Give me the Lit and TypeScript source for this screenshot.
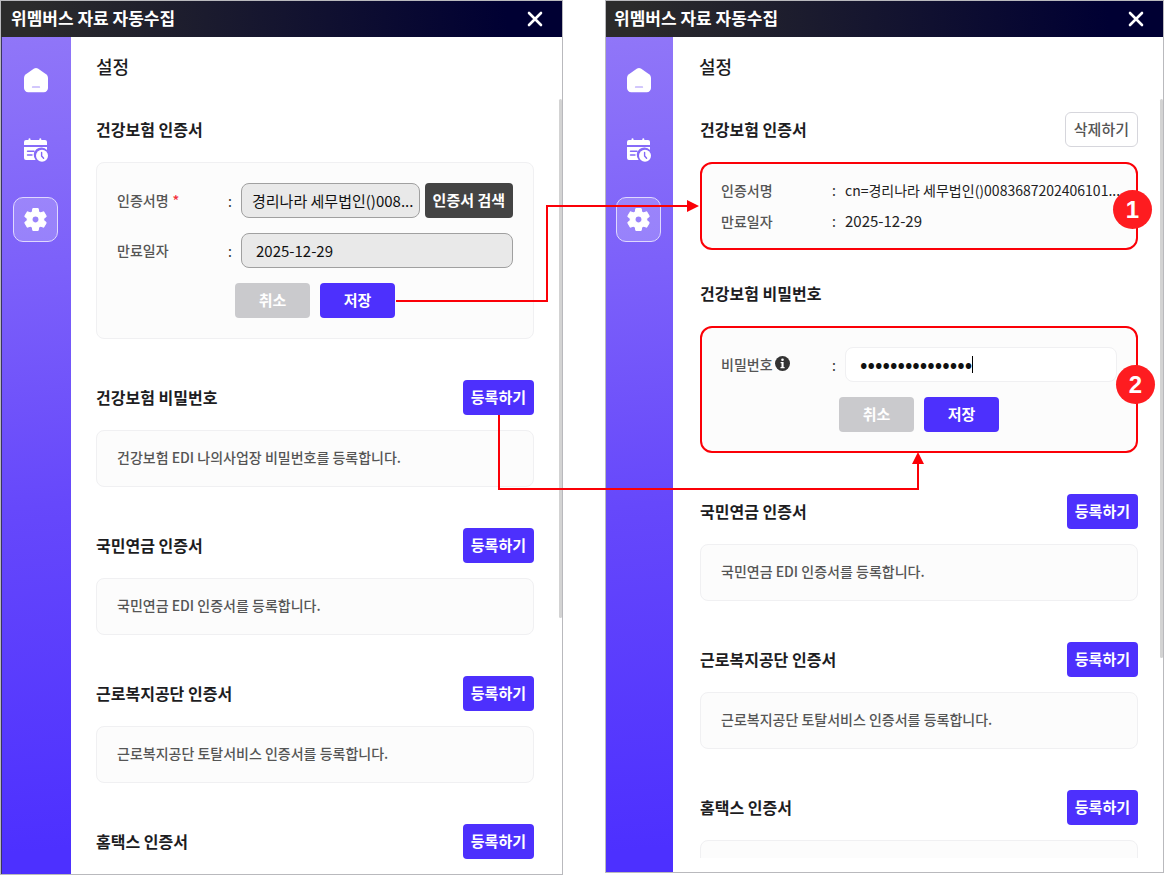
import { LitElement, html, css, svg, nothing } from "lit";
import { customElement, property } from "lit/decorators.js";

const FONT = css`"Noto Sans CJK KR", "Noto Sans", sans-serif`;

const homeIcon = svg`
  <svg class="icon" viewBox="0 0 26 26" width="26" height="26" aria-hidden="true">
    <path fill="#fff" d="M11.100 1.600a3.400 3.400 0 0 1 3.800 0l8.200 5.600a4.400 4.400 0 0 1 1.900 3.600V21a4.200 4.200 0 0 1-4.200 4.200H5.200A4.200 4.200 0 0 1 1 21V10.800a4.400 4.400 0 0 1 1.900-3.600z"/>
    <path d="M9.500 20h7" stroke="#a58ffa" stroke-width="1.200" stroke-linecap="round"/>
  </svg>`;

const scheduleIcon = svg`
  <svg class="icon" viewBox="0 0 26 26" width="26" height="26" aria-hidden="true">
    <path fill="#fff" d="M5.500 2.200a1 1 0 0 1 2 0V3h8.800v-.8a1 1 0 0 1 2 0V3H22a2 2 0 0 1 2 2v3H1V5a2 2 0 0 1 2-2h2.500z"/>
    <path fill="#fff" d="M1 10h23v3.100A7.200 7.200 0 0 0 12.600 23H3a2 2 0 0 1-2-2z"/>
    <path d="M4.500 14.200h6.500M4.500 18h4.500" stroke="#8267f8" stroke-width="1.400" stroke-linecap="round"/>
    <circle cx="19" cy="18.800" r="6.900" fill="#8267f8"/>
    <circle cx="19" cy="18.800" r="6" fill="#fff"/>
    <path d="M18.600 15.400v3.600l2 2.300" fill="none" stroke="#8267f8" stroke-width="1.400" stroke-linecap="round" stroke-linejoin="round"/>
  </svg>`;

const gearIcon = svg`
  <svg class="icon" viewBox="1 1 22 22" width="25" height="25" aria-hidden="true">
    <path fill="#fff" stroke="#fff" stroke-width="1" stroke-linejoin="round" d="M19.140 12.940c.04-.3.06-.61.06-.94 0-.32-.02-.64-.07-.94l2.030-1.580a.49.49 0 0 0 .12-.61l-1.920-3.320a.488.488 0 0 0-.59-.22l-2.390.96c-.5-.38-1.030-.7-1.620-.94l-.36-2.540a.484.484 0 0 0-.48-.41h-3.840c-.24 0-.43.17-.47.41l-.36 2.540c-.59.24-1.130.57-1.620.94l-2.390-.96c-.22-.08-.47 0-.59.22L2.740 8.870c-.12.21-.08.47.12.61l2.030 1.580c-.05.3-.09.63-.09.94s.02.64.07.94l-2.030 1.580a.49.49 0 0 0-.12.61l1.920 3.320c.12.22.37.29.59.22l2.390-.96c.5.38 1.030.7 1.620.94l.36 2.540c.05.24.24.41.48.41h3.840c.24 0 .44-.17.47-.41l.36-2.540c.59-.24 1.130-.56 1.620-.94l2.390.96c.22.08.47 0 .59-.22l1.920-3.320c.12-.22.07-.47-.12-.61zM12 15.100a3.100 3.100 0 1 1 0-6.200 3.100 3.100 0 0 1 0 6.200z"/>
  </svg>`;

const infoIcon = svg`
  <svg viewBox="0 0 15 15" width="15" height="15" role="img" aria-label="도움말">
    <circle cx="7.500" cy="7.500" r="7.500" fill="#333"/>
    <circle cx="7.500" cy="3.700" r="1.300" fill="#fff"/>
    <path d="M5.600 6h3v5h1v1.200H5.500V11h1V7.200h-.9z" fill="#fff"/>
  </svg>`;

@customElement("collector-window")
export class CollectorWindow extends LitElement {
  @property({ type: Boolean, reflect: true }) compact = false;

  static styles = css`
    :host {
      display: flex;
      flex-direction: column;
      min-width: 0;
      box-sizing: border-box;
      border: 1px solid #b9b9bd;
      background: #fff;
      overflow: hidden;
      font-family: ${FONT};
    }
    .bar {
      flex: none;
      display: flex;
      align-items: center;
      justify-content: space-between;
      height: 36px;
      padding: 0 18px 0 10px;
      background: linear-gradient(85deg, #2b2b2b 5%, #000033 90%);
      color: #fff;
      font-size: 17px;
      font-weight: 700;
      line-height: 24px;
    }
    .bar span {
      padding-bottom: 2px;
    }
    :host([compact]) .bar {
      padding-left: 8px;
    }
    .close {
      display: flex;
      padding: 0 0 1px;
      border: 0;
      background: none;
    }
    .body {
      flex: 1;
      display: flex;
      min-height: 0;
    }
    nav {
      flex: none;
      display: flex;
      flex-direction: column;
      align-items: center;
      gap: 25px;
      width: 70px;
      box-sizing: border-box;
      padding: 20px 2px 0 0;
      border-left: 1px solid #3a3560;
      background: linear-gradient(175deg, #9076f8, #7c60fa 28%, #6648fb 56%, #4d30ff 97%);
    }
    :host([compact]) nav {
      width: 67px;
      border-left: 0;
    }
    .nav {
      display: flex;
      align-items: center;
      justify-content: center;
      width: 45px;
      height: 45px;
      padding: 0;
      border: 1px solid transparent;
      border-radius: 10px;
      background: none;
    }
    .nav.on {
      border-color: #e0d9fe;
      background: rgba(255, 255, 255, 0.2);
    }
    main {
      position: relative;
      flex: 1;
      min-width: 0;
      display: flex;
      flex-direction: column;
    }
    :host([compact]) main {
      padding-bottom: 14px;
    }
    h1 {
      flex: none;
      margin: 0;
      padding: 16px 25px 20px;
      color: #1d1d1f;
      font-size: 18px;
      font-weight: 500;
      line-height: 26px;
    }
    .scroll {
      flex: 1;
      min-height: 0;
      overflow: hidden;
      padding: 13px 28px 0 25px;
    }
    :host([compact]) .scroll {
      padding: 13px 25px 0 27px;
    }
    :host([compact]) h1 {
      padding-left: 26px;
    }
    .thumb {
      position: absolute;
      top: 62px;
      right: 0;
      width: 3px;
      height: 62%;
      border-radius: 2px;
      background: #d3d3d3;
    }
    :host([compact]) .thumb {
      height: 67%;
    }
  `;

  render() {
    return html`
      <header class="bar">
        <span>위멤버스 자료 자동수집</span>
        <button class="close" aria-label="닫기">
          <svg viewBox="0 0 18 18" width="18" height="18">
            <path d="M3 3l12 12M15 3L3 15" stroke="#fff" stroke-width="2.600" stroke-linecap="round" />
          </svg>
        </button>
      </header>
      <div class="body">
        <nav>
          <button class="nav" aria-label="홈">${homeIcon}</button>
          <button class="nav" aria-label="일정">${scheduleIcon}</button>
          <button class="nav on" aria-label="설정">${gearIcon}</button>
        </nav>
        <main>
          <h1>설정</h1>
          <div class="scroll"><slot></slot></div>
          <div class="thumb"></div>
        </main>
      </div>
    `;
  }
}

@customElement("app-root")
export class AppRoot extends LitElement {
  static styles = css`
    :host {
      display: block;
      position: relative;
      height: 100vh;
      overflow: hidden;
      background: #fff;
      font-family: ${FONT};
      font-size: 14px;
      line-height: 20px;
      color: #555;
    }
    .board {
      display: grid;
      grid-template-columns: 563fr 559fr;
      gap: 42px;
      height: 100%;
    }
    .second {
      margin-bottom: 2px;
    }
    section {
      margin-bottom: 41px;
    }
    section.near {
      margin-bottom: 26px;
    }
    .head {
      display: flex;
      align-items: center;
      justify-content: space-between;
      height: 35px;
      margin-bottom: 15px;
    }
    h2 {
      margin: 0;
      padding-bottom: 2px;
      color: #1d1d1f;
      font-size: 16px;
      font-weight: 700;
      line-height: 24px;
    }
    .card {
      position: relative;
      box-sizing: border-box;
      padding: 20px;
      border: 1px solid #f0f0f2;
      border-radius: 8px;
      background: #fcfcfc;
    }
    .card.note {
      min-height: 57px;
      padding: 17px 20px 19px;
    }
    .card p {
      margin: 0;
      line-height: 19px;
      font-weight: 500;
    }
    .card.marked {
      padding: 19px;
      border: 2px solid #fb0007;
      border-radius: 12px;
    }
    .card.brief {
      padding: 10px 0 12px 19px;
    }
    .form {
      display: flex;
      flex-direction: column;
      gap: 15px;
    }
    .row {
      display: flex;
      align-items: center;
    }
    .brief .row {
      height: 31px;
    }
    .name {
      flex: none;
      display: flex;
      align-items: center;
      gap: 2px;
      width: 111px;
      font-weight: 500;
    }
    .form .name {
      padding-bottom: 2px;
    }
    .req {
      color: #f3303c;
      padding-left: 2px;
    }
    .colon {
      flex: none;
      width: 13px;
      color: #333;
    }
    .value {
      min-width: 0;
      color: #222;
      white-space: nowrap;
    }
    .date {
      font-size: 15px;
    }
    .box {
      flex: 1;
      min-width: 0;
      box-sizing: border-box;
      height: 35px;
      padding: 0 4px 0 10px;
      border: 1px solid #a0a0a0;
      border-radius: 8px;
      background: #e9e9e9;
      color: #111;
      font-family: ${FONT};
      font-size: 15px;
      outline: none;
    }
    .box.date {
      padding: 0 14px;
    }
    .box.secret {
      width: 100%;
      padding: 0 14px 6px;
      border-color: #f0f0f2;
      background: #fff;
      font-size: 22px;
    }
    .entry {
      position: relative;
      flex: 1;
      display: flex;
      min-width: 0;
    }
    .caret {
      position: absolute;
      left: 127px;
      top: 9px;
      width: 1px;
      height: 17px;
      background: #000;
    }
    .btn {
      flex: none;
      height: 35px;
      padding: 0 8px 1px;
      border: 0;
      border-radius: 4px;
      background: #4d30fd;
      color: #fff;
      font-family: ${FONT};
      font-size: 15px;
      font-weight: 700;
      line-height: 22px;
      white-space: nowrap;
    }
    .btn.dark {
      margin-left: 5px;
      background: #444;
    }
    .btn.line {
      border: 1px solid #d6d6dc;
      border-radius: 6px;
      background: #fff;
      color: #555;
      font-weight: 500;
    }
    .btn.grey {
      background: #cacacd;
    }
    .acts {
      display: flex;
      justify-content: center;
      gap: 10px;
    }
    .acts .btn {
      width: 75px;
    }
    .badge {
      position: absolute;
      display: flex;
      align-items: center;
      justify-content: center;
      right: -16px;
      top: 26px;
      width: 39px;
      height: 39px;
      border-radius: 50%;
      background: #fe1c20;
      color: #fff;
      font: 700 24px/28px "Liberation Sans", sans-serif;
    }
    .badge.two {
      right: -19px;
      top: 37px;
    }
    .links {
      position: absolute;
      left: 0;
      top: 0;
      pointer-events: none;
    }
  `;

  private section(title: string, body: unknown, action: unknown = nothing, near = false) {
    return html`
      <section class=${near ? "near" : ""}>
        <div class="head"><h2>${title}</h2>${action}</div>
        ${body}
      </section>
    `;
  }

  private note(title: string, text = "") {
    return this.section(
      title,
      html`<div class="card note">${text ? html`<p>${text}</p>` : nothing}</div>`,
      html`<button class="btn">등록하기</button>`
    );
  }

  private actions() {
    return html`
      <div class="acts">
        <button class="btn grey">취소</button>
        <button class="btn">저장</button>
      </div>
    `;
  }

  private certForm() {
    return html`
      <div class="card form">
        <div class="row">
          <label class="name" for="cert">인증서명<span class="req">*</span></label>
          <span class="colon">:</span>
          <input class="box" id="cert" readonly value="경리나라 세무법인()008..." />
          <button class="btn dark">인증서 검색</button>
        </div>
        <div class="row">
          <label class="name" for="until">만료일자</label>
          <span class="colon">:</span>
          <input class="box date" id="until" readonly value="2025-12-29" />
        </div>
        ${this.actions()}
      </div>
    `;
  }

  private certSummary() {
    return html`
      <div class="card marked brief">
        <div class="row">
          <span class="name">인증서명</span><span class="colon">:</span>
          <span class="value">cn=경리나라 세무법인()0083687202406101...</span>
        </div>
        <div class="row">
          <span class="name">만료일자</span><span class="colon">:</span>
          <span class="value date">2025-12-29</span>
        </div>
        <span class="badge">1</span>
      </div>
    `;
  }

  private passwordForm() {
    return html`
      <div class="card marked form">
        <div class="row">
          <label class="name" for="pw">비밀번호${infoIcon}</label>
          <span class="colon">:</span>
          <span class="entry">
            <input class="box secret" id="pw" type="password" value="123456789012345" />
            <span class="caret"></span>
          </span>
        </div>
        ${this.actions()}
        <span class="badge two">2</span>
      </div>
    `;
  }

  render() {
    return html`
      <div class="board">
        <collector-window>
          ${this.section("건강보험 인증서", this.certForm())}
          ${this.note("건강보험 비밀번호", "건강보험 EDI 나의사업장 비밀번호를 등록합니다.")}
          ${this.note("국민연금 인증서", "국민연금 EDI 인증서를 등록합니다.")}
          ${this.note("근로복지공단 인증서", "근로복지공단 토탈서비스 인증서를 등록합니다.")}
          ${this.note("홈택스 인증서")}
        </collector-window>
        <collector-window class="second" compact>
          ${this.section(
            "건강보험 인증서",
            this.certSummary(),
            html`<button class="btn line">삭제하기</button>`,
            true
          )}
          ${this.section("건강보험 비밀번호", this.passwordForm())}
          ${this.note("국민연금 인증서", "국민연금 EDI 인증서를 등록합니다.")}
          ${this.note("근로복지공단 인증서", "근로복지공단 토탈서비스 인증서를 등록합니다.")}
          ${this.note("홈택스 인증서")}
        </collector-window>
      </div>
      <svg class="links" width="1164" height="875" viewBox="0 0 1164 875" aria-hidden="true">
        <g fill="none" stroke="#fb0007" stroke-width="2">
          <path d="M396 301H547V206H688" />
          <path d="M499 415V489H918V463" />
        </g>
        <path fill="#fb0007" d="M699 206l-12-6v12zM918 452l-6 12h12z" />
      </svg>
    `;
  }
}
